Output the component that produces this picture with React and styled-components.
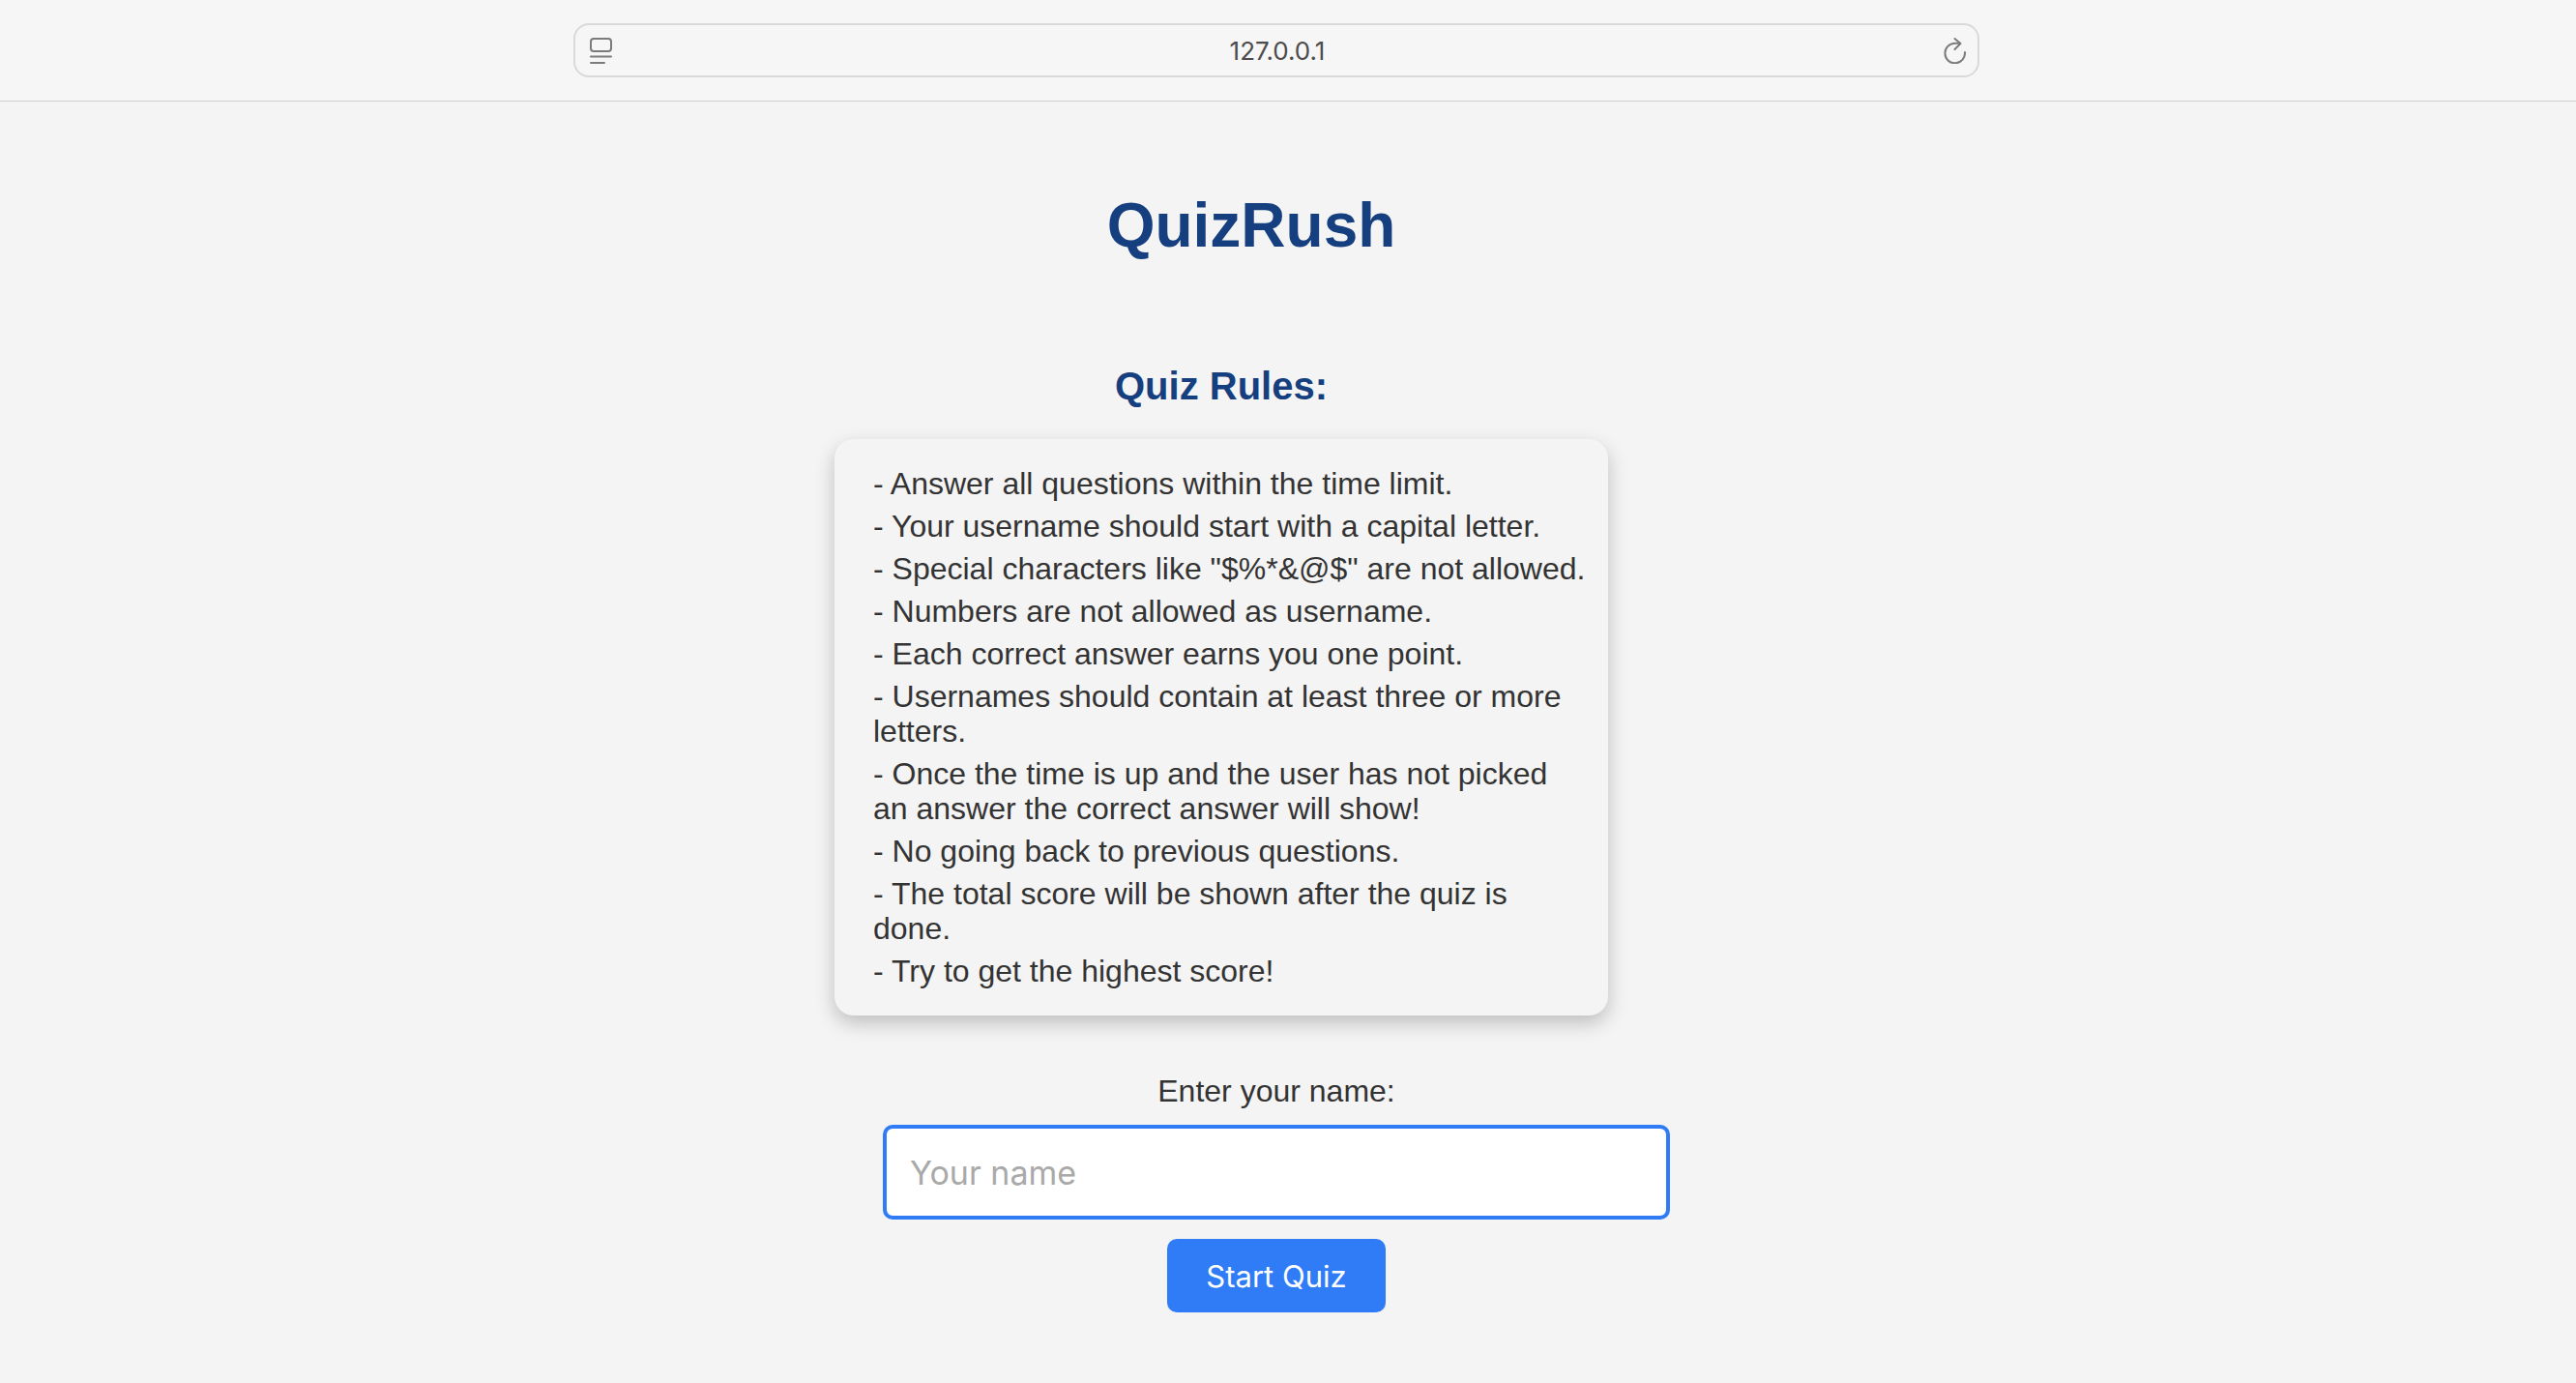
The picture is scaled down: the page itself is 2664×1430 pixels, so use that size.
import React, { useState } from "react";
import styled, { createGlobalStyle } from "styled-components";

const GlobalStyle = createGlobalStyle`
  *, *::before, *::after {
    box-sizing: border-box;
  }
  body {
    margin: 0;
    background: #f4f4f4;
    color: #333333;
    font-family: "Liberation Sans", Arial, sans-serif;
    font-size: 32px;
    line-height: 36px;
  }
`;

const systemFont = `Inter, "Noto Sans", sans-serif`;

const Toolbar = styled.header`
  display: flex;
  justify-content: center;
  padding: 24px 24px 24px 0;
  background: #f6f6f6;
  border-bottom: 1px solid #d0d0d0;
`;

const AddressBar = styled.div`
  display: flex;
  align-items: center;
  width: 56%;
  max-width: 1454px;
  height: 56px;
  padding: 0 12px 0 14px;
  border: 2px solid #d9d9d9;
  border-radius: 16px;
`;

const IconButton = styled.button`
  display: flex;
  flex: none;
  padding: 0;
  border: 0;
  background: none;
  color: #7b7b7b;
`;

const Icon = styled.svg`
  width: 24px;
  height: 28px;
  fill: none;
  stroke: currentColor;
  stroke-width: 2;
  stroke-linecap: round;
  stroke-linejoin: round;
`;

const AddressInput = styled.input`
  flex: 1;
  min-width: 0;
  height: 52px;
  padding: 0;
  border: 0;
  outline: 0;
  background: none;
  color: #4c4c4c;
  font: 400 26px/32px ${systemFont};
  text-align: center;
`;

const Page = styled.main`
  display: flex;
  flex-direction: column;
  align-items: center;
  padding: 92px 24px 72px 0;
`;

const Title = styled.h1`
  margin: 0;
  padding-right: 52px;
  color: #163f80;
  font-size: 64px;
  line-height: 72px;
`;

const Rules = styled.section`
  display: flex;
  flex-direction: column;
  align-items: center;
  gap: 32px;
  margin-top: 107px;
  padding-right: 114px;
`;

const RulesHeading = styled.h2`
  margin: 0;
  color: #163f80;
  font-size: 40px;
  line-height: 46px;
`;

const RuleList = styled.ul`
  width: 800px;
  max-width: 100%;
  margin: 0;
  padding: 24px 20px 24px 40px;
  border-radius: 20px;
  box-shadow: 0 8px 20px rgba(0, 0, 0, 0.22);
  list-style: none;
`;

const Rule = styled.li`
  padding: 4px 0;
`;

const Form = styled.form`
  display: flex;
  flex-direction: column;
  align-items: center;
  margin-top: 60px;
`;

const NameInput = styled.input`
  width: 814px;
  max-width: 100%;
  height: 98px;
  margin: 17px 0 20px;
  padding: 0 24px;
  border: 4px solid #2f7cf6;
  border-radius: 10px;
  outline: 0;
  background: #ffffff;
  color: #333333;
  font: 400 34px/44px ${systemFont};

  &::placeholder {
    color: #a9a9a9;
    opacity: 1;
  }
`;

const StartButton = styled.button`
  height: 76px;
  padding: 2px 40px 0;
  border: 0;
  border-radius: 10px;
  background: #2f7cf6;
  color: #ffffff;
  font: 400 31px/40px ${systemFont};
`;

const rules = [
  "Answer all questions within the time limit.",
  "Your username should start with a capital letter.",
  'Special characters like "$%*&@$" are not allowed.',
  "Numbers are not allowed as username.",
  "Each correct answer earns you one point.",
  "Usernames should contain at least three or more letters.",
  "Once the time is up and the user has not picked an answer the correct answer will show!",
  "No going back to previous questions.",
  "The total score will be shown after the quiz is done.",
  "Try to get the highest score!",
];

export default function App() {
  const [name, setName] = useState("");

  return (
    <>
      <GlobalStyle />
      <Toolbar>
        <AddressBar>
          <IconButton type="button" aria-label="Page menu">
            <Icon viewBox="0 0 24 28" aria-hidden="true">
              <rect x="2" y="2" width="21" height="13" rx="3" />
              <path d="M2 20.5H23M2 27H16" />
            </Icon>
          </IconButton>
          <AddressInput aria-label="Address" defaultValue="127.0.0.1" />
          <IconButton type="button" aria-label="Reload page">
            <Icon viewBox="0 0 24 28" aria-hidden="true">
              <path d="M23 16A10.3 10.3 0 1 1 12.7 6.7H18" />
              <path d="M12.5 2L18.5 7L12.5 13" />
            </Icon>
          </IconButton>
        </AddressBar>
      </Toolbar>
      <Page>
        <Title>QuizRush</Title>
        <Rules>
          <RulesHeading>Quiz Rules:</RulesHeading>
          <RuleList>
            {rules.map((rule) => (
              <Rule key={rule}>{`- ${rule}`}</Rule>
            ))}
          </RuleList>
        </Rules>
        <Form onSubmit={(event) => event.preventDefault()}>
          <label htmlFor="name">Enter your name:</label>
          <NameInput
            id="name"
            type="text"
            placeholder="Your name"
            value={name}
            onChange={(event) => setName(event.target.value)}
          />
          <StartButton type="submit">Start Quiz</StartButton>
        </Form>
      </Page>
    </>
  );
}
